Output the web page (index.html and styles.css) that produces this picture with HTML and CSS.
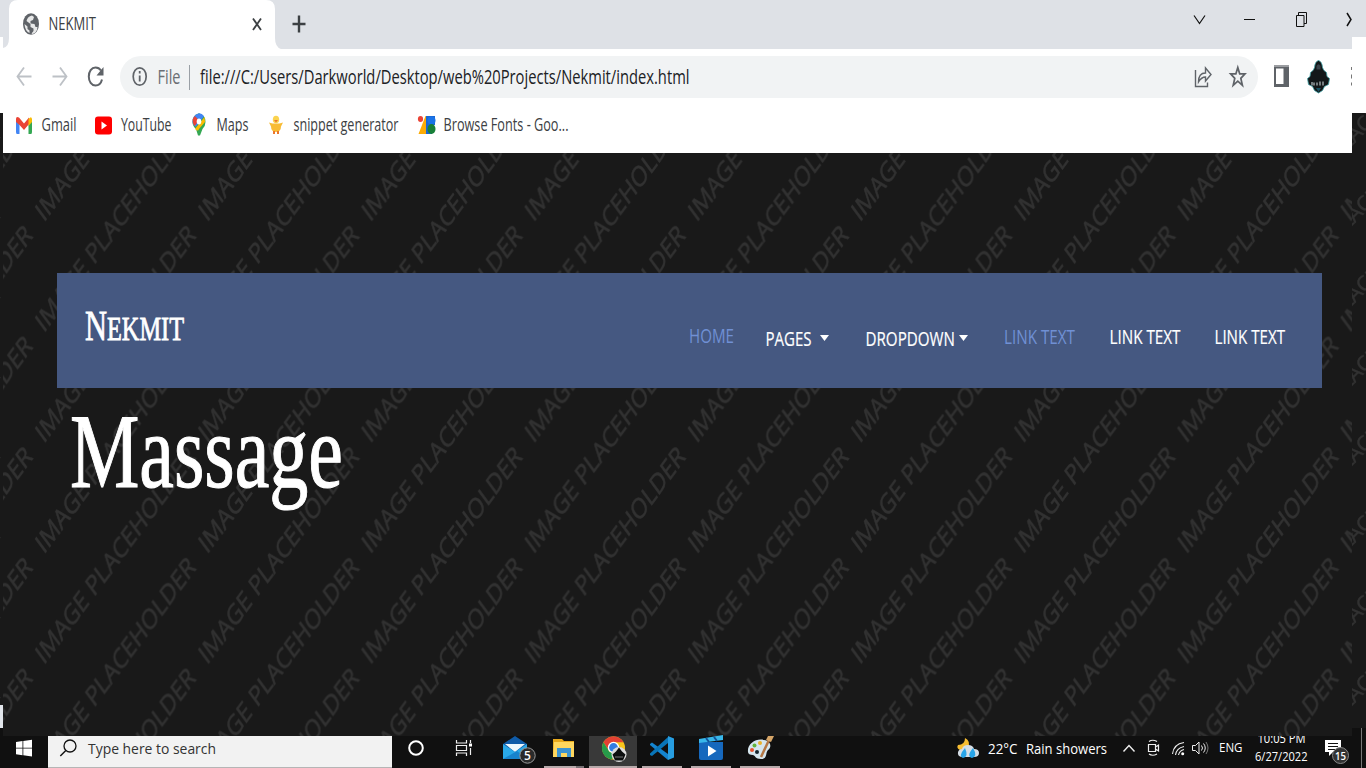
FILE: index.html
```html
<!DOCTYPE html>
<html lang="en">
<head>
<meta charset="utf-8">
<title>NEKMIT</title>
<link rel="stylesheet" href="styles.css">
</head>
<body>
<div class="desktop">
  <svg class="backdrop" width="1366" height="736" aria-hidden="true">
    <defs>
      <pattern id="wide" width="163.200" height="110.670" patternUnits="userSpaceOnUse" x="44" y="1.500">
        <g class="mark">
          <text transform="translate(0 0) scale(1 1.358) rotate(-45)" textLength="216" lengthAdjust="spacingAndGlyphs">IMAGE PLACEHOLDER</text>
          <text transform="translate(0 110.67) scale(1 1.358) rotate(-45)" textLength="216" lengthAdjust="spacingAndGlyphs">IMAGE PLACEHOLDER</text>
          <text transform="translate(0 221.34) scale(1 1.358) rotate(-45)" textLength="216" lengthAdjust="spacingAndGlyphs">IMAGE PLACEHOLDER</text>
          <text transform="translate(0 332) scale(1 1.358) rotate(-45)" textLength="216" lengthAdjust="spacingAndGlyphs">IMAGE PLACEHOLDER</text>
          <text transform="translate(163.2 110.67) scale(1 1.358) rotate(-45)" textLength="216" lengthAdjust="spacingAndGlyphs">IMAGE PLACEHOLDER</text>
          <text transform="translate(163.2 0) scale(1 1.358) rotate(-45)" textLength="216" lengthAdjust="spacingAndGlyphs">IMAGE PLACEHOLDER</text>
        </g>
      </pattern>
      <pattern id="edge" width="160" height="80" patternUnits="userSpaceOnUse" x="1288" y="50">
        <g class="mark">
          <text transform="translate(0 0) rotate(-45)" textLength="216" lengthAdjust="spacingAndGlyphs">IMAGE PLACEHOLDER</text>
          <text transform="translate(0 80) rotate(-45)" textLength="216" lengthAdjust="spacingAndGlyphs">IMAGE PLACEHOLDER</text>
          <text transform="translate(0 160) rotate(-45)" textLength="216" lengthAdjust="spacingAndGlyphs">IMAGE PLACEHOLDER</text>
          <text transform="translate(0 240) rotate(-45)" textLength="216" lengthAdjust="spacingAndGlyphs">IMAGE PLACEHOLDER</text>
        </g>
      </pattern>
    </defs>
    <rect width="1366" height="736" fill="#191919"/>
    <rect x="3" y="153" width="1349" height="583" fill="url(#wide)"/>
    <rect y="113" width="3" height="592" fill="url(#edge)"/>
    <rect y="705" width="3" height="23" fill="#e1e5ea"/>
    <path d="M0 728h3v8H0zM1352 728h14v8h-14z" fill="#101010"/>
    <rect x="1352" y="113" width="14" height="615" fill="url(#edge)"/>
  </svg>

  <div class="screen">
    <div class="gutter gutter-left"></div>
    <main class="window">
      <header class="tabs">
        <svg class="tab" viewBox="3 0 278 49" width="278" height="49">
          <path d="M3 49V48Q9 47 9 38V9Q9 0 18 0H266Q275 0 275 9V38Q275 47 281 49Z" fill="#fff"/>
          <ellipse cx="31" cy="24" rx="8" ry="10.800" fill="#5f6368"/>
          <path d="M32 15.500l2 1.500-1 3-2.500 1v2.500l4 .5 1 3h2q-.5 6-5 7l-1-.5 2-2.500v-2.500l-3-1.500v-3l-4-3q1-4 4-5zM24.500 24l3 2.500v2.500l2 1.500v2.500q-4.500-2-5-9z" fill="#fff" opacity=".85"/>
          <text x="48.500" y="30" font-size="18" textLength="47.500" lengthAdjust="spacingAndGlyphs" fill="#3c4043">NEKMIT</text>
          <path d="M253 18.500l8 11.500M261 18.500l-8 11.500" stroke="#3c4043" stroke-width="1.800"/>
        </svg>
        <svg class="new-tab" viewBox="291 0 16 49" width="16" height="49"><path d="M292.500 24h13M299 15.500v17" stroke="#3c4043" stroke-width="2.400"/></svg>
        <svg class="window-buttons" viewBox="1190 0 162 49" width="162" height="49" fill="none" stroke="#111">
          <path d="M1194 15.500l5.500 8 5.500-8" stroke-width="1.200"/><path d="M1244 19.500h11"/>
          <path d="M1296.500 15.500h7.500v11h-7.500zM1298.500 15v-2.500h8v11h-2.500"/>
          <path d="M1347 13l4 6.500-4 6.500" stroke-width="1.500"/>
        </svg>
      </header>

      <section class="toolbar">
        <svg class="history" viewBox="15 49 92 56" width="92" height="56" fill="none" stroke-width="1.800">
          <path d="M31.500 76.500H18M24 67.500l-6.500 9 6.500 9M52.500 76.500H66M60 67.500l6.500 9-6.500 9" stroke="#bdc1c6"/>
          <path d="M101 70.500q-2-3-5.500-3c-4 0-6.700 4-6.700 9s2.700 9 6.700 9q5 0 6.500-6" stroke="#5f6368" stroke-width="2"/>
          <path d="M103.500 67v8.500h-7z" fill="#5f6368"/>
        </svg>
        <div class="address">
          <svg viewBox="132 56 557 42" width="557" height="42">
            <ellipse cx="139.700" cy="76.500" rx="6.500" ry="8.700" fill="none" stroke="#5f6368" stroke-width="1.700"/>
            <path d="M139.700 75.500v6M139.700 71v2.500" stroke="#5f6368" stroke-width="1.800"/>
            <text x="157.500" y="84" font-size="20" textLength="23" lengthAdjust="spacingAndGlyphs" fill="#6a6e73">File</text>
            <path d="M189.500 65v25" stroke="#9aa0a6"/>
            <text x="200" y="84" font-size="20" textLength="489.500" lengthAdjust="spacingAndGlyphs" fill="#202124">file:///C:/Users/Darkworld/Desktop/web%20Projects/Nekmit/index.html</text>
          </svg>
          <svg viewBox="1193 56 54 42" width="54" height="42" fill="none" stroke="#5f6368" stroke-width="1.400">
            <path d="M1195.500 70v16.500h12v-4M1198.500 82c0-6 3-9 7-9v-5l5.500 6.500-5.500 6.500v-4q-4 0-7 5z"/>
            <path d="M1237.800 67.500l1.900 6.300h5.300l-4.200 4.500 1.600 7-4.600-4.200-4.600 4.200 1.600-7-4.200-4.500h5.300z" stroke-width="1.700"/>
          </svg>
        </div>
        <svg class="extras" viewBox="1273 49 79 56" width="79" height="56">
          <path d="M1274 66h15v21h-15z" fill="#5f6368"/><path d="M1274 65h15v2h-15z" fill="#9b9da1"/><path d="M1276 68.500h7.500v15.500h-7.500z" fill="#fff"/>
          <path d="M1318.500 60.500q3.500 1 4 7 .5 3 4 5l.5 4 2.500 2-1 6-4 2-2 4-4 2.500-4-2.500-2-4-4-2-1-6 2.500-2 .5-4q3.500-2 4-5 .5-6 4-7z" fill="#121719" stroke="#42a5aa" stroke-width=".8"/>
          <path d="M1316.500 66q2-3.500 4 0v3.500h-4z" fill="#39434a"/><path d="M1312 82v3.500m2-3v3m3-3v3m3-4v4m3-4v4" stroke="#a8b2b5" stroke-width="1.300"/><path d="M1316 88h5l-2.500 4z" fill="#195464"/>
          <path d="M1351.500 67v3m0 4.500v4m0 4v3" stroke="#777" stroke-width="1"/>
        </svg>
      </section>

      <section class="bookmarks">
        <svg class="bookmark" viewBox="16 105 60 48" width="60" height="48">
          <path d="M16 119h3.500v15H17q-1 0-1-2z" fill="#4285f4"/><path d="M28.500 119H32v13q0 2-1 2h-2.500z" fill="#34a853"/><path d="M16 119q0-3 3-1.500l5 6 5-6v6.500l-5 6-4.500-5-3.500-3z" fill="#ea4335"/><path d="M28.500 119q3.500-4 3.500 1v2l-3.500 4z" fill="#fbbc04"/>
          <text x="41.500" y="131" textLength="35" lengthAdjust="spacingAndGlyphs">Gmail</text>
        </svg>
        <svg class="bookmark" viewBox="95 105 78 48" width="78" height="48">
          <rect x="95" y="116.500" width="17" height="18" rx="3" fill="#f00"/><path d="M101.500 121.500v8l5.500-4z" fill="#fff"/>
          <text x="121" y="131" textLength="50.500" lengthAdjust="spacingAndGlyphs">YouTube</text>
        </svg>
        <svg class="bookmark" viewBox="192 105 58 48" width="58" height="48">
          <path d="M192.500 122q0-7 6.500-8.700 6.500 1.700 6.500 8.700 0 4-3 7l-2.500 6.500h-2l-2-6.500q-3.500-3-3.500-7z" fill="#34a853"/><path d="M192.500 122q0-7 6.500-8.700 3 0 5 3l-8 10.500q-3.500-2-3.500-4.800z" fill="#4285f4"/><path d="M192.800 119l2-3 4 4-4 6q-2.500-2-2-7z" fill="#ea4335"/><path d="M204.500 117l-9.500 12q3 3 4 0l6-7z" fill="#fbbc04"/><ellipse cx="199" cy="121.500" rx="2.300" ry="3" fill="#fff"/>
          <text x="216.500" y="131" textLength="32" lengthAdjust="spacingAndGlyphs">Maps</text>
        </svg>
        <svg class="bookmark" viewBox="269 105 130 48" width="130" height="48">
          <ellipse cx="276" cy="119.500" rx="3.200" ry="3.800" fill="#fbd34f"/><path d="M269 122.500l3.500 1h7l3.500-1-2 4q0 5-5 5.500-5-.5-5-5.500z" fill="#f8bc35"/><path d="M274 120h4l-2 2.500zM273 131h2v3h-2zM277 131h2v3h-2z" fill="#ea772c"/>
          <text x="293.500" y="131" textLength="105" lengthAdjust="spacingAndGlyphs">snippet generator</text>
        </svg>
        <svg class="bookmark" viewBox="418 105 151 48" width="151" height="48">
          <ellipse cx="420.500" cy="119" rx="2.600" ry="3" fill="#ea4335"/><path d="M425.500 116h3v18h-10z" fill="#fbab06"/><path d="M426 116h9v9h-3v9h-6z" fill="#1967d2"/><circle cx="431.500" cy="120.500" r="4" fill="#1a73e8"/><ellipse cx="431.500" cy="129" rx="4" ry="5" fill="#188038"/>
          <text x="443.500" y="131" textLength="125" lengthAdjust="spacingAndGlyphs">Browse Fonts - Goo...</text>
        </svg>
      </section>

      <article class="site">
        <nav class="navbar">
          <svg class="brand" viewBox="85 273 100 115" width="100" height="115">
            <text x="85" y="340" textLength="99" lengthAdjust="spacingAndGlyphs"><tspan font-size="42">N</tspan><tspan font-size="33.500">EKMIT</tspan></text>
          </svg>
          <div class="links">
            <svg class="link active" viewBox="689 273 43 115" width="43" height="115"><text x="689" y="343" textLength="45" lengthAdjust="spacingAndGlyphs">HOME</text></svg>
            <svg class="link" viewBox="766 273 66 115" width="66" height="115"><text x="765.500" y="346" textLength="46" lengthAdjust="spacingAndGlyphs">PAGES</text><path d="M820 335h9l-4.500 6z"/></svg>
            <svg class="link" viewBox="866 273 104 115" width="104" height="115"><text x="865.500" y="346" textLength="89.500" lengthAdjust="spacingAndGlyphs">DROPDOWN</text><path d="M959 335h9l-4.500 6z"/></svg>
            <svg class="link active" viewBox="1004 273 71 115" width="71" height="115"><text x="1004" y="344" textLength="71" lengthAdjust="spacingAndGlyphs">LINK TEXT</text></svg>
            <svg class="link" viewBox="1109 273 71 115" width="71" height="115"><text x="1109.500" y="344" textLength="71" lengthAdjust="spacingAndGlyphs">LINK TEXT</text></svg>
            <svg class="link" viewBox="1214 273 71 115" width="71" height="115"><text x="1214.500" y="344" textLength="70.500" lengthAdjust="spacingAndGlyphs">LINK TEXT</text></svg>
          </div>
        </nav>
        <h1 class="headline"><svg viewBox="70 388 275 130" width="275" height="130"><text x="70" y="487" textLength="273" lengthAdjust="spacingAndGlyphs">Massage</text></svg></h1>
      </article>
    </main>
    <div class="gutter gutter-right"></div>
  </div>

  <footer class="taskbar">
    <svg class="start" viewBox="0 736 48 32" width="48" height="32"><path d="M16 742l6.500-1v6.700H16zM23.300 740.900l8.700-1.200v8h-8.700zM16 748.500h6.500v6.700l-6.500-1zM23.300 748.500H32v8l-8.700-1.200z" fill="#fff"/></svg>
    <div class="search">
      <svg viewBox="58 736 160 31" width="160" height="31"><circle cx="70" cy="746" r="6" fill="none" stroke="#111" stroke-width="1.300"/><path d="M65.800 750.500l-5.500 5.500" stroke="#111" stroke-width="1.400"/><text x="88" y="754" font-size="14.500" textLength="128" lengthAdjust="spacingAndGlyphs" fill="#333">Type here to search</text></svg>
    </div>
    <svg class="apps" viewBox="392 736 400 32" width="400" height="32">
      <circle cx="416" cy="748" r="6.800" fill="none" stroke="#fff" stroke-width="2"/>
      <path d="M456.500 740v3h10v-3M456.500 756v-3h10v3M456.500 745.500h10v5h-10zM470.500 740v3M470.500 748v7" fill="none" stroke="#eee" stroke-width="1.200"/><path d="M469 743.500h3v3h-3z" fill="#fff"/>
      <path d="M503 744l12-8 12 8v15h-24z" fill="#0f5ba8"/><path d="M505 744h20l-10 8z" fill="#eef7fc"/><path d="M503 744l12 8 12-8v15h-24z" fill="#29a8e8"/><path d="M503 759l14-8 10 8z" fill="#1783cd"/>
      <circle cx="527.500" cy="755.500" r="7.700" fill="#2b2b2b" stroke="#999"/><text x="524" y="760" font-size="12" font-weight="600" fill="#fff">5</text>
      <path d="M553 739h9l2 2h10v16h-21z" fill="#e8a91c"/><path d="M554 742h20v15h-21z" fill="#ffd75e"/><path d="M557 748h14v9h-4v-4h-6v4h-4z" fill="#3d94d1"/>
      <path d="M544 766h32v2h-32z" fill="#b6a9aa"/><path d="M576 766h8v2h-8z" fill="#777073"/>
      <path d="M589 736h48v32h-48z" fill="#393939"/><path d="M589 766h48v2h-48z" fill="#b6a9aa"/>
      <circle cx="613.500" cy="748" r="11.500" fill="#f9c61b"/><path d="M603.500 742.300A11.500 11.500 0 0 1 623.500 742.300H613.500L609 751z" fill="#e34133"/><path d="M603.500 742.300l6 9.500 5 2-2.500 5.700A11.500 11.500 0 0 1 603.500 742.300z" fill="#279b4a"/><circle cx="613.500" cy="747.500" r="5.700" fill="#fff"/><circle cx="613.500" cy="747.500" r="4.400" fill="#337de1"/>
      <circle cx="619" cy="754.500" r="7.500" fill="#ddd"/><path d="M619 747.500l3 4 3.500 3-2.500 6h-8l-2.500-6 3.500-3z" fill="#0d0f10"/><path d="M615 757h8" stroke="#777"/>
      <path d="M668 736l6 2.500v19l-6 2.500z" fill="#279de0"/><path d="M650 744l2-1.500 16 11.500v6l-18-15z" fill="#1484cf"/><path d="M650 753.500l18-16.500v6l-16 13-2-1z" fill="#0975b8"/><path d="M642 766h40v2h-40z" fill="#b6a9aa"/>
      <path d="M699 742h24v16q0 2-2 2h-20q-2 0-2-2z" fill="#1668bd"/><path d="M699 739l24-4v5l-24 3z" fill="#39b7ea"/><path d="M706 738l3 4M714 737l3 4" stroke="#12549b" stroke-width="2"/><path d="M708 745.500v11l8.500-5.500z" fill="#fff"/><path d="M691 766h40v2h-40z" fill="#b6a9aa"/>
      <path d="M748 752c-1-8 8-14 16-12 7 1 8 7 4 10-3 3 0 9-7 9-6 0-5-3-8-4-3 0-5-1-5-3z" fill="#d6e6ee"/><circle cx="752" cy="750" r="2" fill="#e8542f"/><circle cx="754.500" cy="745.500" r="2" fill="#63b43b"/><circle cx="760" cy="743" r="2" fill="#eab12b"/><circle cx="757" cy="752" r="2" fill="#13242d"/><path d="M761 757l8-17" stroke="#b47745" stroke-width="2.500"/><path d="M766 740l2-4h6l-3 6z" fill="#d5a568"/><path d="M740 766h40v2h-40z" fill="#b6a9aa"/>
    </svg>
    <svg class="tray" viewBox="955 728 411 40" width="411" height="40" fill="none" stroke="#eee">
      <path d="M965 738q6 3 3 10l-8 2q-4-2-2-5 7 0 7-7z" fill="#f7bd31" stroke="none"/><path d="M963 757q-6 0-5-5 1-3 4-3 1-4 6-4 5 0 6 4 5 0 5 4t-5 4z" fill="#d4dde5" stroke="none"/><path d="M965 748q-7 8-2 10 6-1 2-10M973 748q-7 8-1 10 6-2 1-10" fill="#27a4e8" stroke="none"/>
      <g class="tray-text"><text x="988" y="754" font-size="14" textLength="29.500" lengthAdjust="spacingAndGlyphs">22°C</text><text x="1026" y="754" font-size="14" textLength="81" lengthAdjust="spacingAndGlyphs">Rain showers</text>
      <text x="1219" y="752" font-size="12.500" textLength="23.500" lengthAdjust="spacingAndGlyphs">ENG</text></g>
      <path d="M1123.500 751.500l5.500-6 5.500 6" stroke-width="1.400"/>
      <path d="M1148.500 744.500h7v7h-7zM1155.500 747l3-2v6l-3-2M1149 741.500q3.500-2.500 8 0M1149 754q3.500 2.500 8 0" stroke-width="1.200"/>
      <path d="M1172.500 754q1-10 11.500-11.500M1175.500 755q1-7 8.500-8.500M1178.500 755q1-4.500 5.500-5.500" stroke-width="1.100"/><circle cx="1182.700" cy="753.700" r="1.500" fill="#fff" stroke="none"/>
      <path d="M1192.500 745.500h3l3.500-3.500v12l-3.500-3.500h-3zM1201.500 745.500q2 2.500 0 5M1203.500 743.500q3.500 4.500 0 9"/><path d="M1206 742q4 6 0 12" stroke="#777"/>
      <svg class="clock" x="1250" y="736" width="64" height="32" viewBox="1250 736 64 32"><g class="tray-text" font-size="12"><text x="1257.500" y="743" textLength="48" lengthAdjust="spacingAndGlyphs">10:05 PM</text><text x="1255" y="761" textLength="52.500" lengthAdjust="spacingAndGlyphs">6/27/2022</text></g></svg>
      <path d="M1325 740h16v12h-8l-4 4v-4h-4z" fill="#fff" stroke="none"/><path d="M1328 743.500h10M1328 746.500h10M1328 749.500h7" stroke="#111"/>
      <circle cx="1340.500" cy="755.500" r="8" fill="#333" stroke="#888"/><text x="1335" y="759.500" font-size="11.500" font-weight="600" textLength="11" lengthAdjust="spacingAndGlyphs" fill="#fff" stroke="none">15</text>
      <path d="M1361.500 728v40" stroke="#777"/>
    </svg>
  </footer>
</div>
</body>
</html>
```

FILE: styles.css
```css
* { box-sizing: border-box; }
body { margin: 0; background: #191919; font-family: "Open Sans", "Noto Sans", sans-serif; overflow: hidden; }
svg { display: block; flex: none; overflow: visible; }

.desktop { position: relative; width: 1366px; height: 768px; display: flex; flex-direction: column; overflow: hidden; }
.backdrop { position: absolute; top: 0; left: 0; overflow: hidden; }
.mark { font-family: "Open Sans", "Noto Sans", sans-serif; font-size: 20.5px; fill: #313131; stroke: #313131; stroke-width: .4px; }

.screen { position: relative; display: flex; height: 736px; }
.gutter { height: 113px; background: linear-gradient(#dee1e6 37px, #fff 37px); }
.gutter-left { width: 3px; }
.gutter-right { width: 14px; }
.window { width: 1349px; display: flex; flex-direction: column; }

.tabs { display: flex; height: 49px; background: #dee1e6; }
.new-tab { margin-left: 10px; }
.window-buttons { margin-left: auto; overflow: hidden; }

.toolbar { display: flex; height: 56px; padding-left: 12px; background: #fff; }
.address { display: flex; justify-content: space-between; width: 1138px; height: 42px; margin: 7px 15px 0 13px; padding: 0 11px 0 12px; border-radius: 21px; background: #f1f3f4; }

.bookmarks { display: flex; height: 48px; padding-left: 13px; background: #fff; }
.bookmark { margin-right: 19px; font-size: 17.5px; fill: #3c4043; }

.site { flex: 1; padding: 120px 30px 0 54px; }
.navbar { display: flex; justify-content: space-between; height: 115px; padding: 0 37px 0 28px; background: #455881; }
.brand { font-family: "Liberation Serif", serif; fill: #fff; stroke: #fff; stroke-width: .8px; }
.links { display: flex; gap: 34px; }
.link { font-size: 20.5px; fill: #fff; }
.link text { stroke: #fff; stroke-width: .2px; }
.link.active text { fill: #7090d4; stroke: none; }
.headline { margin: 0 0 0 13px; font-weight: 400; font-family: "Liberation Serif", serif; font-size: 105px; }
.headline svg { fill: #fff; stroke: #fff; stroke-width: 1.1px; }

.taskbar { position: relative; display: flex; align-items: flex-end; height: 32px; background: #101010; }
.search { width: 344px; height: 32px; padding-left: 10px; background: #f2f2f2; border-bottom: 1px solid #b5b5b5; }
.tray { margin-left: auto; }
.tray-text { fill: #fff; stroke: none; }
.clock { overflow: hidden; }
```
